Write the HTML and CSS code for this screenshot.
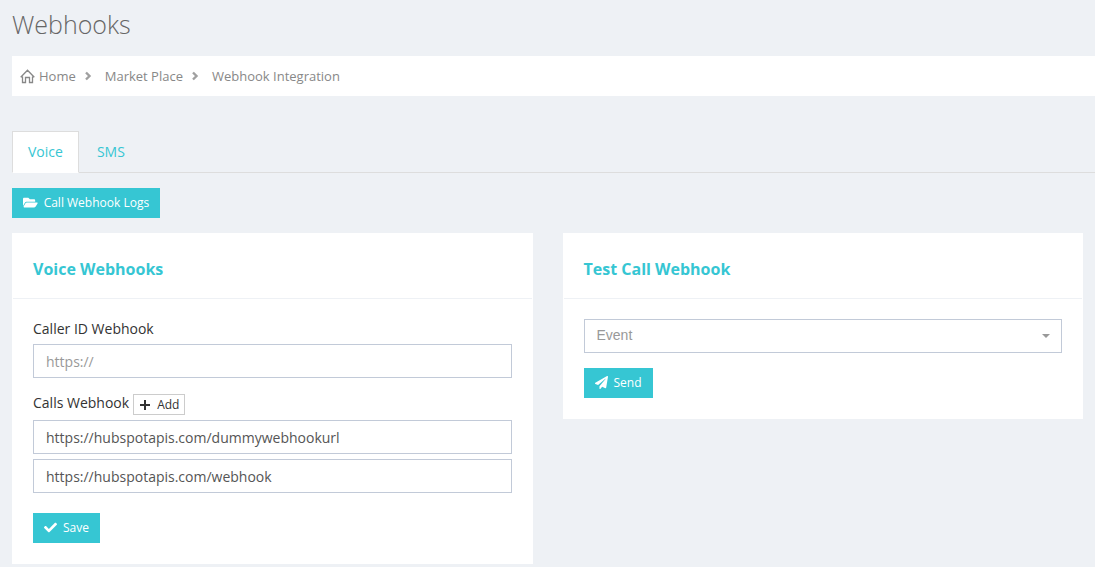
FILE: index.html
```html
<!DOCTYPE html>
<html lang="en">
  <head>
    <title>Webhooks</title>
    <meta charset="utf-8">
    <meta name="viewport" content="width=device-width, initial-scale=1">
    <link rel="stylesheet" href="styles.css">
  </head>
  <body>
    <h1 class="page-title">Webhooks</h1>
    <nav class="page-bar" aria-label="Breadcrumb">
      <ul class="breadcrumb">
        <li>
          <svg class="icon-home" viewBox="0 0 15 15"><path d="M.7 8.300 L7.500 1.200 L14.300 8.300 M2.500 7.500 V13.500 H5.500 V8.500 H9.500 V13.500 H12.500 V7.500"/></svg>
          <a href="#">Home</a>
          <svg class="icon-angle" viewBox="0 0 8 10"><path d="M2 1.500 L5.500 5 L2 8.500"/></svg>
        </li>
        <li>
          <a href="#">Market Place</a>
          <svg class="icon-angle" viewBox="0 0 8 10"><path d="M2 1.500 L5.500 5 L2 8.500"/></svg>
        </li>
        <li><span>Webhook Integration</span></li>
      </ul>
    </nav>
    <ul class="tabs">
      <li><a class="tab active" href="#voice">Voice</a></li>
      <li><a class="tab" href="#sms">SMS</a></li>
    </ul>
    <main id="voice" class="tab-content">
      <button class="btn" type="button">
        <svg class="icon" viewBox="0 0 576 512"><path d="M572.694 292.093L500.270 416.248A63.997 63.997 0 0 1 444.989 448H45.025c-18.523 0-30.064-20.093-20.731-36.093l72.424-124.155A64 64 0 0 1 152 256h399.964c18.523 0 30.064 20.093 20.730 36.093zM152 224h328v-48c0-26.510-21.490-48-48-48H272l-64-64H48C21.490 64 0 85.490 0 112v278.046l69.077-118.418C86.214 242.250 117.989 224 152 224z"/></svg>
        Call Webhook Logs
      </button>
      <div class="row">
        <section class="portlet">
          <h2 class="portlet-title">Voice Webhooks</h2>
          <form class="portlet-body">
            <label class="field-label" for="caller-id">Caller ID Webhook</label>
            <input class="form-control" id="caller-id" type="text" placeholder="https://">
            <div class="label-row">
              <label for="calls-webhook">Calls Webhook</label>
              <button class="btn-add" type="button">
                <svg class="icon-plus" viewBox="0 0 12 12"><path d="M6 1 V11 M1 6 H11"/></svg>
                Add
              </button>
            </div>
            <div class="url-list">
              <input class="form-control" id="calls-webhook" type="text" value="https://hubspotapis.com/dummywebhookurl">
              <input class="form-control" type="text" aria-label="Calls Webhook 2" value="https://hubspotapis.com/webhook">
            </div>
            <button class="btn btn-save" type="button">
              <svg class="icon" viewBox="0 0 512 512"><path d="M173.898 439.404l-166.400-166.400c-9.997-9.997-9.997-26.206 0-36.204l36.203-36.204c9.997-9.998 26.207-9.998 36.204 0L192 312.690 432.095 72.596c9.997-9.997 26.207-9.997 36.204 0l36.203 36.204c9.997 9.997 9.997 26.206 0 36.204l-294.400 294.401c-9.998 9.997-26.207 9.997-36.204-.001z"/></svg>
              Save
            </button>
          </form>
        </section>
        <section class="portlet">
          <h2 class="portlet-title">Test Call Webhook</h2>
          <form class="portlet-body">
            <div class="select-wrap">
              <select class="form-control" aria-label="Event">
                <option>Event</option>
              </select>
            </div>
            <button class="btn btn-send" type="button">
              <svg class="icon" viewBox="0 0 512 512"><path d="M476 3.200L12.500 270.600c-18.100 10.400-15.800 35.600 2.200 43.200L121 358.400l287.300-253.200c5.500-4.900 13.300 2.600 8.600 8.300L176 407v80.500c0 23.600 28.500 32.900 42.500 15.800L282 426l124.600 52.200c14.200 6 30.400-2.900 33-18.200l72-432C515 7.800 493.300-6.800 476 3.200z"/></svg>
              Send
            </button>
          </form>
        </section>
      </div>
    </main>
  </body>
</html>
```
FILE: styles.css
```css
:root {
  --page: #eef1f5;
  --teal: #36c6d3;
  --field: #c2cad8;
  --muted: #888;
}
* {
  box-sizing: border-box;
}
body {
  margin: 0;
  padding: 8px 0 0 12px;
  font-family: "Open Sans", sans-serif;
  font-size: 14px;
  line-height: 20px;
  color: #333;
  background-color: var(--page);
}
h1,
h2,
ul {
  margin: 0;
  padding: 0;
}
ul {
  list-style: none;
}
a {
  text-decoration: none;
}
button,
input,
select {
  font-family: inherit;
}
.page-title {
  margin-bottom: 16px;
  font-size: 25px;
  line-height: 32px;
  font-weight: 300;
  color: #666;
}
.page-bar {
  padding: 10px 8px;
  background-color: #fff;
}
.breadcrumb {
  display: flex;
  gap: 13px;
  font-size: 13px;
  color: var(--muted);
}
.breadcrumb li {
  display: flex;
  align-items: center;
}
.breadcrumb a {
  color: var(--muted);
}
.icon-home {
  width: 15px;
  height: 15px;
  margin-right: 4px;
  fill: none;
  stroke: var(--muted);
  stroke-width: 1.3;
}
.icon-angle {
  width: 8px;
  height: 10px;
  margin-left: 8px;
  fill: none;
  stroke: #a0a0a0;
  stroke-width: 2.4;
}
.tabs {
  display: flex;
  gap: 2px;
  margin-top: 35px;
  border-bottom: 1px solid #ddd;
}
.tab {
  display: block;
  margin-bottom: -1px;
  padding: 10px 15px;
  border: 1px solid transparent;
  color: var(--teal);
}
.tab.active {
  border-color: #ddd #ddd #fff;
  background-color: #fff;
}
.tab-content {
  padding: 15px 12px 3px 0;
}
.btn {
  display: flex;
  align-items: center;
  gap: 6px;
  height: 30px;
  padding: 0 11px;
  border: 0;
  font-size: 12px;
  line-height: 18px;
  color: #fff;
  background-color: var(--teal);
}
.icon {
  height: 13px;
  margin-bottom: 1px;
  fill: #fff;
}
.row {
  display: grid;
  grid-template-columns: 1fr 1fr;
  gap: 30px;
  align-items: start;
  margin-top: 15px;
}
.portlet {
  padding: 1px;
  background-color: #fff;
}
.portlet-title {
  padding: 25px 20px 19px;
  border-bottom: 1px solid #eef1f5;
  font-size: 16px;
  line-height: 20px;
  font-weight: 700;
  color: var(--teal);
}
.portlet-body {
  padding: 20px;
}
.field-label {
  display: block;
  margin-bottom: 5px;
}
.form-control {
  display: block;
  width: 100%;
  height: 34px;
  padding: 6px 12px;
  border: 1px solid var(--field);
  font-size: 14px;
  color: #555;
  background-color: #fff;
}
.form-control::placeholder {
  color: #999;
}
.label-row {
  display: flex;
  align-items: flex-start;
  gap: 4px;
  margin: 15px 0 5px;
}
.btn-add {
  display: flex;
  align-items: center;
  gap: 6px;
  height: 21px;
  margin-top: 1px;
  padding: 0 5px;
  border: 1px solid #ccc;
  font-size: 12px;
  line-height: 18px;
  color: #333;
  background-color: #fff;
}
.icon-plus {
  width: 12px;
  height: 12px;
  fill: none;
  stroke: #333;
  stroke-width: 2;
}
.url-list {
  display: grid;
  gap: 5px;
}
.btn-save {
  margin-top: 20px;
}
.btn-send {
  margin-top: 15px;
}
.select-wrap {
  position: relative;
}
.select-wrap::after {
  content: "";
  position: absolute;
  top: 15px;
  right: 12px;
  border: 4px solid transparent;
  border-top-color: #999;
  border-bottom: 0;
  pointer-events: none;
}
.select-wrap .form-control {
  padding: 5px 12px 7px;
  appearance: none;
  font-family: "Liberation Sans", Arial, sans-serif;
  color: #999;
}
```
